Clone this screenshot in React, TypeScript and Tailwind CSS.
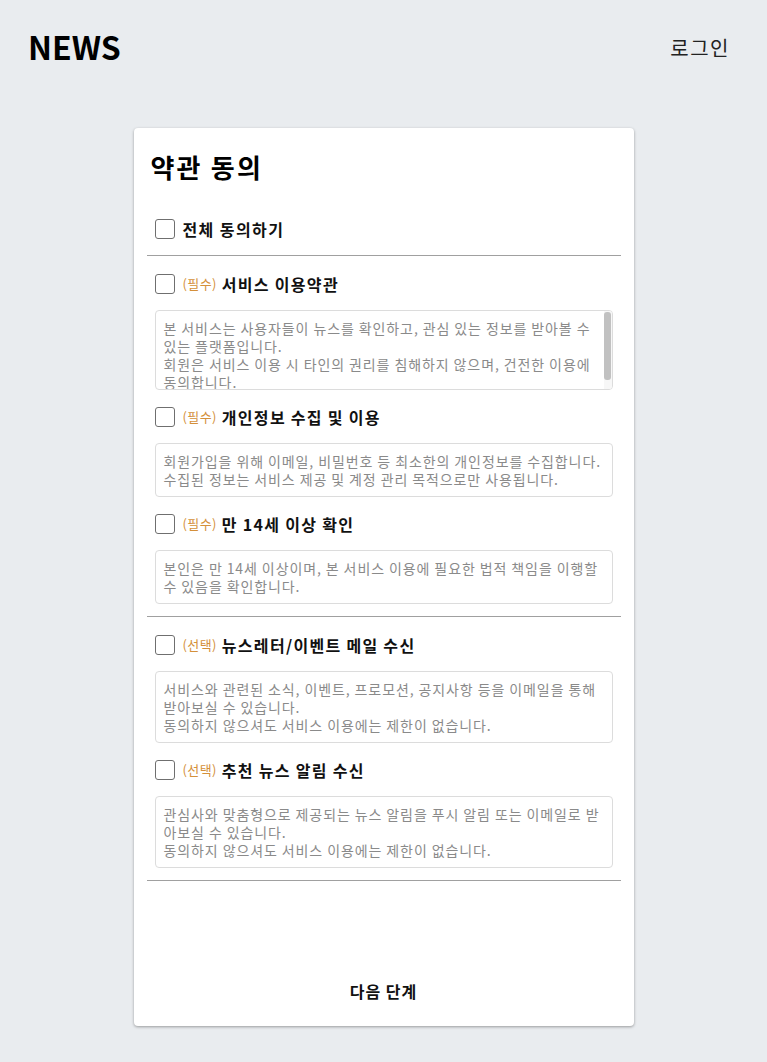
import { useState } from "react";

const TERMS = [
  {
    tag: "필수",
    label: "서비스 이용약관",
    scroll: true,
    lines: [
      "본 서비스는 사용자들이 뉴스를 확인하고, 관심 있는 정보를 받아볼 수",
      "있는 플랫폼입니다.",
      "회원은 서비스 이용 시 타인의 권리를 침해하지 않으며, 건전한 이용에",
      "동의합니다.",
    ],
  },
  {
    tag: "필수",
    label: "개인정보 수집 및 이용",
    lines: [
      "회원가입을 위해 이메일, 비밀번호 등 최소한의 개인정보를 수집합니다.",
      "수집된 정보는 서비스 제공 및 계정 관리 목적으로만 사용됩니다.",
    ],
  },
  {
    tag: "필수",
    label: "만 14세 이상 확인",
    lines: [
      "본인은 만 14세 이상이며, 본 서비스 이용에 필요한 법적 책임을 이행할",
      "수 있음을 확인합니다.",
    ],
  },
];

const OPTIONAL = [
  {
    tag: "선택",
    label: "뉴스레터/이벤트 메일 수신",
    lines: [
      "서비스와 관련된 소식, 이벤트, 프로모션, 공지사항 등을 이메일을 통해",
      "받아보실 수 있습니다.",
      "동의하지 않으셔도 서비스 이용에는 제한이 없습니다.",
    ],
  },
  {
    tag: "선택",
    label: "추천 뉴스 알림 수신",
    lines: [
      "관심사와 맞춤형으로 제공되는 뉴스 알림을 푸시 알림 또는 이메일로 받",
      "아보실 수 있습니다.",
      "동의하지 않으셔도 서비스 이용에는 제한이 없습니다.",
    ],
  },
];

type Term = { tag: string; label: string; lines: string[]; scroll?: boolean };

function Box() {
  return (
    <input
      type="checkbox"
      className="appearance-none w-5 h-5 shrink-0 rounded-[3px] border-[1.5px] border-[#6f6f6f] bg-white"
    />
  );
}

function TermItem({ t }: { t: Term }) {
  return (
    <div className="flex flex-col gap-[14px]">
      <label className="flex items-center h-6 gap-2">
        <Box />
        <span className="text-[13px] tracking-[0.4px] text-[#d4903a]">({t.tag})</span>
        <span className="text-[16px] font-bold tracking-[1.3px] text-[#111] -ml-[3px]">{t.label}</span>
      </label>
      <div
        className={`relative rounded-[4px] border border-[#dcdcdc] bg-white px-2 py-2 text-[14px] leading-[18px] tracking-[0.9px] text-[#8a8a8a] ${
          t.scroll ? "h-[80px] overflow-hidden" : ""
        }`}
      >
        {t.lines.map((l) => (
          <div key={l} className="whitespace-nowrap">
            {l}
          </div>
        ))}
        {t.scroll && (
          <div className="absolute right-0 top-0 bottom-0 w-[8px] bg-[#f7f7f7]">
            <div className="mx-auto mt-px h-[68px] w-[7px] rounded-[3px] bg-[#c1c1c1]" />
          </div>
        )}
      </div>
    </div>
  );
}

export default function App() {
  const [all, setAll] = useState(false);

  return (
    <div className="min-h-[1062px] bg-[#e9ecef] font-['Noto_Sans_CJK_KR',sans-serif] text-[#111]">
      <header className="h-[92px] flex items-center justify-between pl-7 pr-[37px]">
        <span className="text-[32px] font-bold text-black -mt-px">NEWS</span>
        <span className="text-[20px] tracking-[1.5px] text-[#222] mt-1">로그인</span>
      </header>

      <main className="mt-[36px] mx-auto w-[500px] rounded-[4px] bg-white shadow-[0_1px_3px_rgba(0,0,0,0.35)] px-[13px] pt-[21px] pb-[11px] flex flex-col">
        <h1 className="pl-1 text-[26px] leading-[36px] font-bold tracking-[2.2px] text-black">약관 동의</h1>

        <label className="mt-[32px] px-2 flex items-center h-6 gap-2">
          <input
            type="checkbox"
            checked={all}
            onChange={() => setAll(!all)}
            className="appearance-none w-5 h-5 shrink-0 rounded-[3px] border-[1.5px] border-[#6f6f6f] bg-white"
          />
          <span className="text-[16px] font-bold tracking-[1.4px]">전체 동의하기</span>
        </label>

        <hr className="mt-[14px] border-0 h-px bg-[#a0a0a0]" />

        <div className="mt-4 px-2 flex flex-col gap-[15px]">
          {TERMS.map((t) => (
            <TermItem key={t.label} t={t} />
          ))}
        </div>

        <hr className="mt-[12px] border-0 h-px bg-[#a0a0a0]" />

        <div className="mt-4 px-2 flex flex-col gap-[15px]">
          {OPTIONAL.map((t) => (
            <TermItem key={t.label} t={t} />
          ))}
        </div>

        <hr className="mt-[12px] border-0 h-px bg-[#a0a0a0]" />

        <button className="mt-[86px] h-12 w-full text-[16px] font-bold tracking-[1px] text-[#111]">다음 단계</button>
      </main>
    </div>
  );
}
